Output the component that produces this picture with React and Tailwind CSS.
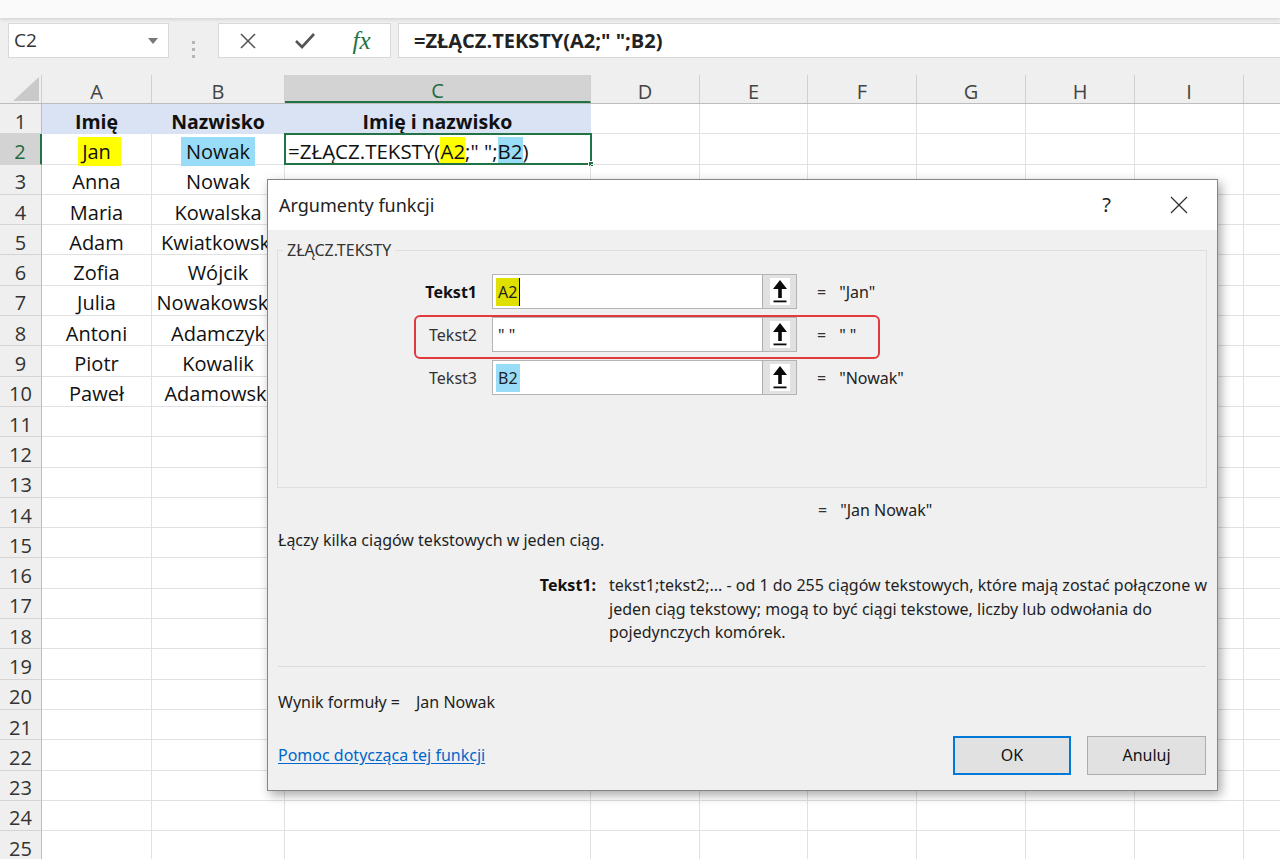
import React from "react";
import clsx from "clsx";

const cols = [
  { name: "A", w: "w-[110px]" },
  { name: "B", w: "w-[133px]" },
  { name: "C", w: "w-[306px]" },
  { name: "D", w: "w-[109px]" },
  { name: "E", w: "w-[108px]" },
  { name: "F", w: "w-[109px]" },
  { name: "G", w: "w-[109px]" },
  { name: "H", w: "w-[109px]" },
  { name: "I", w: "w-[109px]" },
  { name: "", w: "w-[109px]" },
];

const people = [
  ["Anna", "Nowak"],
  ["Maria", "Kowalska"],
  ["Adam", "Kwiatkowski"],
  ["Zofia", "Wójcik"],
  ["Julia", "Nowakowska"],
  ["Antoni", "Adamczyk"],
  ["Piotr", "Kowalik"],
  ["Paweł", "Adamowski"],
];

const rows = Array.from({ length: 25 }, (_, i) => i + 1);

function cellContent(r, c) {
  if (r === 1 && c < 3) {
    const t = ["Imię", "Nazwisko", "Imię i nazwisko"][c];
    return <span className="font-bold text-[19.5px]">{t}</span>;
  }
  if (r === 2) {
    if (c === 0) return <span className="bg-[#ffff00] pl-[4px] pr-[10px] -mr-[6px] leading-[29px]">Jan</span>;
    if (c === 1) return <span className="bg-[#99dcf7] px-[5px] leading-[29px]">Nowak</span>;
    if (c === 2)
      return (
        <>
          <span className="pl-[3px] leading-[27px] text-[20.5px]">
            =ZŁĄCZ.TEKSTY(<span className="bg-[#ffff00]">A2</span>;" ";<span className="bg-[#99dcf7]">B2</span>)
          </span>
          {/* active cell frame */}
          <span className="absolute -left-px -top-px -right-[2px] -bottom-px border-2 border-[#217346] pointer-events-none" />
          <span className="absolute -right-[4px] -bottom-[3px] w-[6px] h-[6px] bg-[#217346] border border-white" />
        </>
      );
  }
  if (r >= 3 && r <= 10 && c < 2) return people[r - 3][c];
  return null;
}

function ArrowButton() {
  return (
    <div className="w-[34px] h-full bg-[#e1e1e1] border-l border-[#adadad] flex items-center justify-center">
      <div className="w-[20px] h-[27px] bg-white flex items-center justify-center">
        <svg width="18" height="25" viewBox="0 0 18 25">
          <polygon points="9,1 2,10 7.2,10 7.2,19 10.8,19 10.8,10 16,10" fill="#0a0a0a" />
          <rect x="2.5" y="21.5" width="13" height="1.8" fill="#0a0a0a" />
        </svg>
      </div>
    </div>
  );
}

function ArgRow({ label, bold, value, children, highlight }) {
  return (
    <div className="relative flex items-center h-[35px]">
      <div className={clsx("w-[199px] text-right", bold ? "font-bold text-[#111]" : "text-[#333]")}>{label}</div>
      <div className="ml-[15px] w-[305px] h-full flex bg-white border border-[#b4b4b4]">
        <div className="flex-1 flex items-center pl-[3px]">{children}</div>
        <ArrowButton />
      </div>
      <span className="ml-[20px] text-[#333]">=</span>
      <span className="ml-[13px] text-[#222]">{value}</span>
      {highlight && (
        <span className="absolute left-[136px] -top-[2px] w-[466px] h-[44px] border-2 border-[#e0393e] rounded-[6px] pointer-events-none" />
      )}
    </div>
  );
}

function Dialog() {
  return (
    <div className="absolute left-[267px] top-[179px] w-[951px] h-[612px] bg-[#f0f0f0] border border-[#858585] shadow-[3px_4px_10px_rgba(0,0,0,0.35)] font-['Noto_Sans',sans-serif] text-[16px] text-[#1f1f1f]">
      <div className="h-[50px] bg-white flex items-center justify-between pl-[11px] pr-[29px]">
        <span className="text-[18px] text-[#222]">Argumenty funkcji</span>
        <div className="flex items-center gap-[59px]">
          <span className="text-[20px] text-[#222]">?</span>
          <svg width="18" height="18" viewBox="0 0 18 18" stroke="#333" strokeWidth="1.3">
            <line x1="1" y1="1" x2="17" y2="17" />
            <line x1="17" y1="1" x2="1" y2="17" />
          </svg>
        </div>
      </div>

      <fieldset className="mt-[10px] ml-[9px] mr-[10px] h-[248px] border border-[#dedede]">
        <legend className="ml-[5px] px-[4px] text-[16px] leading-[20px] text-[#333]">ZŁĄCZ.TEKSTY</legend>
        <div className="mt-[14px] flex flex-col gap-[8px]">
          <ArgRow label="Tekst1" bold value={'"Jan"'}>
            <span className="bg-[#e0e000] px-[2px] leading-[28px] border-r border-black">A2</span>
          </ArgRow>
          <ArgRow label="Tekst2" value={'" "'} highlight>
            <span className="pl-[2px]">" "</span>
          </ArgRow>
          <ArgRow label="Tekst3" value={'"Nowak"'}>
            <span className="bg-[#99dcf7] px-[2px] leading-[28px]">B2</span>
          </ArgRow>
        </div>
      </fieldset>

      <div className="mt-[12px] ml-[550px] leading-[20px] text-[#333]">
        =<span className="ml-[13px] text-[#222]">"Jan Nowak"</span>
      </div>

      <div className="mt-[10px] ml-[10px] leading-[20px]">Łączy kilka ciągów tekstowych w jeden ciąg.</div>

      <div className="mt-[24px] flex leading-[23.5px]">
        <div className="w-[328px] text-right font-bold text-[#111]">Tekst1:</div>
        <div className="ml-[13px] whitespace-nowrap">
          <div>tekst1;tekst2;... - od 1 do 255 ciągów tekstowych, które mają zostać połączone w</div>
          <div>jeden ciąg tekstowy; mogą to być ciągi tekstowe, liczby lub odwołania do</div>
          <div>pojedynczych komórek.</div>
        </div>
      </div>

      <div className="mt-[21px] ml-[10px] mr-[11px] border-t border-[#dcdcdc]" />

      <div className="mt-[25px] ml-[10px] leading-[20px] flex">
        <span className="w-[138px]">Wynik formuły =</span>
        <span>Jan Nowak</span>
      </div>

      <div className="mt-[24px] flex items-center pl-[10px] pr-[11px]">
        <a className="flex-1 text-[#0066cc] underline underline-offset-2">Pomoc dotycząca tej funkcji</a>
        <button className="w-[118px] h-[39px] bg-[#e1e1e1] border-2 border-[#0078d7] text-[#111]">OK</button>
        <button className="ml-[16px] w-[119px] h-[39px] bg-[#e1e1e1] border border-[#adadad] text-[#111]">Anuluj</button>
      </div>
    </div>
  );
}

export default function App() {
  return (
    <div className="relative w-[1280px] h-[859px] overflow-hidden bg-white font-['Open_Sans',sans-serif] text-[20px] text-[#111]">
      {/* window strip */}
      <div className="relative z-10 h-[18px] bg-[#fafafa] shadow-[0_1px_4px_rgba(0,0,0,0.15)]" />

      {/* formula bar */}
      <div className="h-[57px] bg-[#efefef] flex pt-[5px]">
        <div className="ml-[8px] w-[161px] h-[35px] bg-white border border-[#d9d9d9] flex items-center justify-between pl-[5px] pr-[10px]">
          <span className="text-[19px] text-[#333]">C2</span>
          <svg width="10" height="6" viewBox="0 0 10 6">
            <polygon points="0,0 10,0 5,6" fill="#777" />
          </svg>
        </div>
        <div className="w-[49px] flex flex-col items-center justify-center gap-[4px]">
          <span className="w-[3px] h-[3px] bg-[#b5b5b5]" />
          <span className="w-[3px] h-[3px] bg-[#b5b5b5]" />
          <span className="w-[3px] h-[3px] bg-[#b5b5b5]" />
        </div>
        <div className="w-[173px] h-[35px] bg-white border border-[#d9d9d9] flex items-center">
          <div className="w-[58px] flex justify-center">
            <svg width="18" height="18" viewBox="0 0 18 18" stroke="#555" strokeWidth="1.6">
              <line x1="2" y1="2" x2="16" y2="16" />
              <line x1="16" y1="2" x2="2" y2="16" />
            </svg>
          </div>
          <div className="w-[58px] flex justify-center">
            <svg width="22" height="18" viewBox="0 0 22 18" fill="none" stroke="#555" strokeWidth="2.6">
              <polyline points="2,9 8,15 20,2" />
            </svg>
          </div>
          <div className="w-[58px] flex justify-center">
            <span className="font-['Liberation_Serif',serif] italic text-[25px] text-[#217346] leading-none">fx</span>
          </div>
        </div>
        <div className="ml-[7px] flex-1 h-[35px] bg-white border border-[#d9d9d9] border-r-0 flex items-center pl-[15px]">
          <span className="font-bold text-[20px] text-[#222]">=ZŁĄCZ.TEKSTY(A2;" ";B2)</span>
        </div>
      </div>

      {/* column headers */}
      <div className="flex h-[29px] bg-[#efefef] border-b border-[#bdbdbd]">
        <div className="w-[42px] shrink-0 flex items-end justify-end pr-[2px] pb-[2px] border-r border-[#cfcfcf]">
          <svg width="26" height="24" viewBox="0 0 26 24">
            <polygon points="26,0 26,24 0,24" fill="#c9c9c9" />
          </svg>
        </div>
        {cols.map((c, ci) => (
          <div
            key={ci}
            className={clsx(
              c.w,
              "shrink-0 flex items-center justify-center pt-[6px] border-r border-[#d0d0d0] text-[20px]",
              c.name === "C" ? "bg-[#d3d3d3] text-[#1e6b41] border-b-2 border-b-[#217346]" : "text-[#444]"
            )}
          >
            {c.name}
          </div>
        ))}
      </div>

      {/* rows */}
      {rows.map((r) => (
        <div key={r} className="flex h-[30.3px]">
          <div
            className={clsx(
              "w-[42px] shrink-0 flex items-center justify-center pt-[6px] border-b border-[#d4d4d4] text-[20px]",
              r === 2
                ? "bg-[#d3d3d3] text-[#1e6b41] border-r-2 border-r-[#217346]"
                : "bg-[#efefef] text-[#333] border-r border-r-[#bdbdbd]"
            )}
          >
            {r}
          </div>
          {cols.map((c, ci) => (
            <div
              key={ci}
              className={clsx(
                c.w,
                "relative shrink-0 flex items-center pt-[6px] whitespace-nowrap border-b border-r",
                r === 2 && ci === 2 ? "justify-start" : "justify-center",
                r === 1 && ci < 3 ? "bg-[#dae3f3] border-[#dae3f3]" : "border-[#e1e1e1]"
              )}
            >
              {cellContent(r, ci)}
            </div>
          ))}
        </div>
      ))}

      <Dialog />
    </div>
  );
}
